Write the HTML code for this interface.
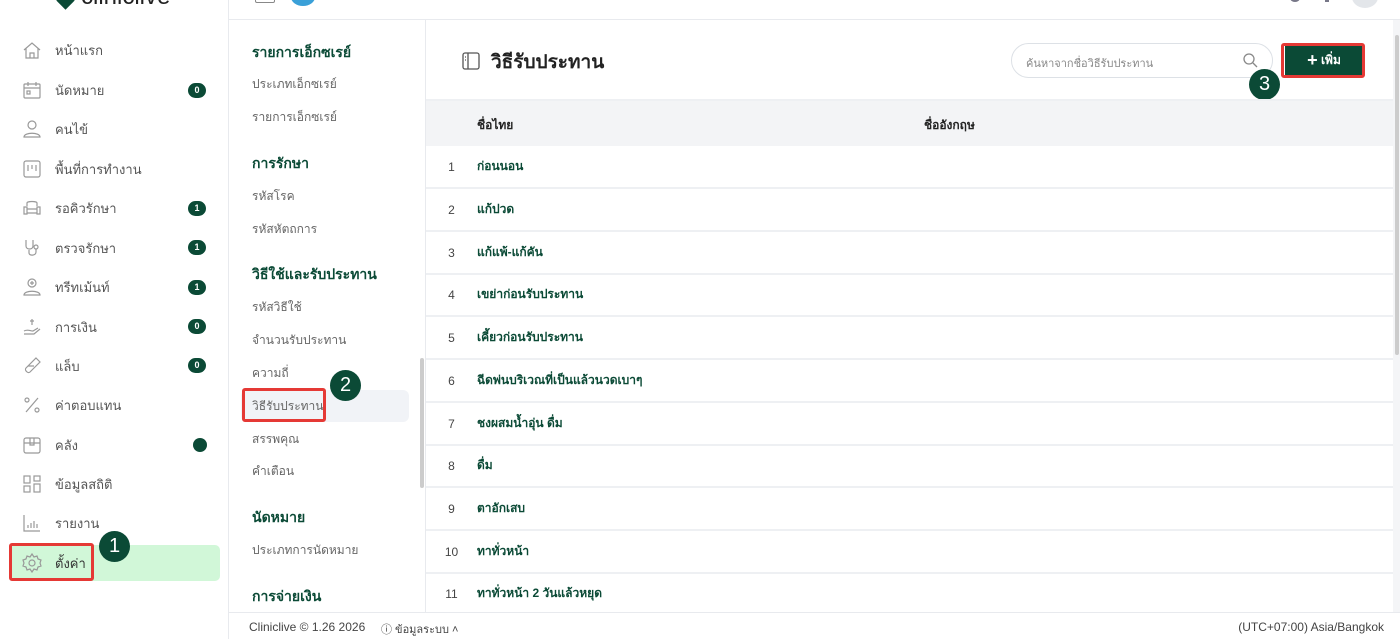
<!DOCTYPE html>
<html><head><meta charset="utf-8"><style>
*{box-sizing:border-box;margin:0;padding:0}
body{width:1400px;height:639px;overflow:hidden;background:#fff;font-family:"Liberation Sans","Noto Sans CJK SC",sans-serif;position:relative;color:#333}
.abs{position:absolute}
.sb{left:0;top:0;width:229px;height:639px;border-right:1px solid #e8eaee;background:#fff}
.ni{position:absolute;left:22px;height:24px;display:flex;align-items:center;font-size:13px;color:#555}
.ni svg{width:20px;height:20px;margin-right:13px;stroke:#999;fill:none;stroke-width:1.2}
.badge{position:absolute;left:188px;width:18px;height:15px;border-radius:8px;background:#0b4a36;color:#fff;font-size:9px;font-weight:bold;text-align:center;line-height:15px}
.sub{left:229px;top:20px;width:197px;height:592px;border-right:1px solid #e8eaee;background:#fff}
.sh{position:absolute;left:23px;font-size:14px;font-weight:bold;color:#0b4a36}
.si{position:absolute;left:23px;font-size:12px;color:#666}
.row{position:absolute;left:426px;width:967px;height:43px;border-bottom:2px solid #eef0f3;font-size:12px;display:flex;align-items:center}
.row .n{width:51px;text-align:center;color:#444}
.row .t{color:#0b4a36;font-weight:bold}
.circ{position:absolute;width:31px;height:31px;border-radius:50%;background:#0b4a36;color:#fff;font-size:20px;text-align:center;line-height:31px}
.red{position:absolute;border:3px solid #e53935;border-radius:3px}
</style></head><body>
<!-- top header -->
<div class="abs" style="left:229px;top:0;width:1171px;height:20px;border-bottom:1px solid #e8eaee"></div>
<div class="abs" style="left:255px;top:-6px;width:20px;height:9px;border:1px solid #888;border-radius:2px"></div>
<div class="abs" style="left:291px;top:-12px;width:24px;height:18px;border-radius:50%;background:#3aa0d8"></div>
<div class="abs" style="left:1290px;top:-6px;width:10px;height:8px;border-radius:50%;background:#778"></div>
<div class="abs" style="left:1325px;top:-4px;width:4px;height:6px;background:#778"></div>
<div class="abs" style="left:1352px;top:-14px;width:26px;height:22px;border-radius:50%;background:#e3e6ea"></div>

<!-- sidebar -->
<div class="abs sb"></div>
<div class="abs" style="left:59px;top:-6px;width:13px;height:13px;background:#0b4a36;transform:rotate(45deg)"></div>
<div class="abs" style="left:81px;top:-15px;font-size:24px;color:#222;line-height:24px">cliniclive</div>
<div class="abs" style="left:10px;top:545px;width:210px;height:36px;background:#d1f7d8;border-radius:5px"></div>
<div class="ni" style="top:38px"><svg viewBox="0 0 20 20"><path d="M2 10L10 3l8 7M4 8v10h12V8M8 18v-5h4v5"/></svg>หน้าแรก</div>
<div class="ni" style="top:78px"><svg viewBox="0 0 20 20"><rect x="2" y="4" width="16" height="14" rx="1"/><path d="M2 8h16M6 2v4M14 2v4"/><rect x="5" y="11" width="3" height="3"/></svg>นัดหมาย</div>
<div class="ni" style="top:117px"><svg viewBox="0 0 20 20"><circle cx="10" cy="6" r="4"/><path d="M2 18c0-5 16-5 16 0z"/></svg>คนไข้</div>
<div class="ni" style="top:157px"><svg viewBox="0 0 20 20"><rect x="2" y="2" width="16" height="16" rx="2"/><path d="M6 6v6M10 6v4M14 6v6"/></svg>พื้นที่การทำงาน</div>
<div class="ni" style="top:196px"><svg viewBox="0 0 20 20"><path d="M5 8V5c0-2 10-2 10 0v3M2 9h3v7H2zM15 9h3v7h-3zM5 11h10v4H5"/></svg>รอคิวรักษา</div>
<div class="ni" style="top:236px"><svg viewBox="0 0 20 20"><path d="M4 2v6c0 4 7 4 7 0V2M7 12v3c0 3 7 3 7-1v-3"/><circle cx="14" cy="9" r="2"/></svg>ตรวจรักษา</div>
<div class="ni" style="top:275px"><svg viewBox="0 0 20 20"><circle cx="10" cy="6" r="4"/><path d="M10 4v4M8 6h4M2 18c0-5 16-5 16 0z"/></svg>ทรีทเม้นท์</div>
<div class="ni" style="top:315px"><svg viewBox="0 0 20 20"><path d="M2 14c4-2 6 0 9 0l5-3M2 17h10l6-5M10 2v6M8 4h4"/></svg>การเงิน</div>
<div class="ni" style="top:354px"><svg viewBox="0 0 20 20"><path d="M14 2l4 4L8 16c-2 2-6-2-4-4zM6 10h6"/></svg>แล็บ</div>
<div class="ni" style="top:393px"><svg viewBox="0 0 20 20"><circle cx="5" cy="5" r="2"/><circle cx="15" cy="15" r="2"/><path d="M16 3L4 17"/></svg>ค่าตอบแทน</div>
<div class="ni" style="top:433px"><svg viewBox="0 0 20 20"><rect x="2" y="3" width="16" height="15" rx="2"/><path d="M2 8h16M8 3v7h4V3"/></svg>คลัง</div>
<div class="ni" style="top:472px"><svg viewBox="0 0 20 20"><rect x="2" y="2" width="6" height="7"/><rect x="12" y="2" width="6" height="5"/><rect x="2" y="12" width="6" height="6"/><rect x="12" y="10" width="6" height="8"/></svg>ข้อมูลสถิติ</div>
<div class="ni" style="top:511px"><svg viewBox="0 0 20 20"><path d="M2 2v16h16M6 15v-3M9 15v-5M12 15v-7M15 15v-4"/></svg>รายงาน</div>
<div class="ni" style="top:551px;color:#333"><svg viewBox="0 0 20 20"><circle cx="10" cy="10" r="3"/><path d="M10 1l2 3 3-1 1 3 3 1-1 3 1 3-3 1-1 3-3-1-2 3-2-3-3 1-1-3-3-1 1-3-1-3 3-1 1-3 3 1z"/></svg>ตั้งค่า</div>
<div class="badge" style="top:83px">0</div>
<div class="badge" style="top:201px">1</div>
<div class="badge" style="top:240px">1</div>
<div class="badge" style="top:280px">1</div>
<div class="badge" style="top:319px">0</div>
<div class="badge" style="top:358px">0</div>
<div class="abs" style="left:193px;top:438px;width:14px;height:14px;border-radius:50%;background:#0b4a36"></div>
<div class="red" style="left:9px;top:543px;width:85px;height:38px"></div>
<div class="circ" style="left:99px;top:531px">1</div>

<!-- submenu -->
<div class="abs sub">
<div class="abs" style="left:12px;top:370px;width:168px;height:32px;background:#f1f3f7;border-radius:6px"></div>
<div class="sh" style="top:22px">รายการเอ็กซเรย์</div>
<div class="si" style="top:55px">ประเภทเอ็กซเรย์</div>
<div class="si" style="top:88px">รายการเอ็กซเรย์</div>
<div class="sh" style="top:133px">การรักษา</div>
<div class="si" style="top:167px">รหัสโรค</div>
<div class="si" style="top:200px">รหัสหัตถการ</div>
<div class="sh" style="top:244px">วิธีใช้และรับประทาน</div>
<div class="si" style="top:278px">รหัสวิธีใช้</div>
<div class="si" style="top:311px">จำนวนรับประทาน</div>
<div class="si" style="top:344px">ความถี่</div>
<div class="si" style="top:377px">วิธีรับประทาน</div>
<div class="si" style="top:410px">สรรพคุณ</div>
<div class="si" style="top:442px">คำเตือน</div>
<div class="sh" style="top:487px">นัดหมาย</div>
<div class="si" style="top:521px">ประเภทการนัดหมาย</div>
<div class="sh" style="top:566px">การจ่ายเงิน</div>
<div class="abs" style="left:191px;top:338px;width:4px;height:130px;background:#ccc;border-radius:2px"></div>
</div>
<div class="red" style="left:242px;top:388px;width:84px;height:34px"></div>
<div class="circ" style="left:330px;top:370px">2</div>

<!-- main -->
<svg class="abs" style="left:461px;top:51px" width="20" height="20" viewBox="0 0 20 20" fill="none" stroke="#555" stroke-width="1.3"><rect x="2" y="2" width="16" height="16" rx="2"/><path d="M7 2v16M4 6h1M4 9h1"/></svg>
<div class="abs" style="left:491px;top:47px;font-size:19px;font-weight:bold;color:#222">วิธีรับประทาน</div>
<div class="abs" style="left:1011px;top:43px;width:262px;height:35px;border:1px solid #dde1e6;border-radius:18px;font-size:11px;color:#888;padding:10px 0 0 14px">ค้นหาจากชื่อวิธีรับประทาน</div>
<svg class="abs" style="left:1242px;top:52px" width="16" height="16" viewBox="0 0 16 16" fill="none" stroke="#888" stroke-width="1.3"><circle cx="7" cy="7" r="5"/><path d="M11 11l4 4"/></svg>
<div class="abs" style="left:1285px;top:45px;width:78px;height:31px;background:#0b4a36;color:#fff;font-size:12px;font-weight:bold;text-align:center;line-height:31px"><span style="font-size:18px;vertical-align:-2px">+</span> เพิ่ม</div>
<div class="red" style="left:1281px;top:43px;width:84px;height:35px"></div>
<div class="circ" style="left:1249px;top:69px">3</div>
<div class="abs" style="left:426px;top:99px;width:967px;height:2px;background:#eef0f3"></div>
<div class="abs" style="left:426px;top:101px;width:967px;height:45px;background:#f3f4f6;font-size:12px;font-weight:bold;color:#222">
<span class="abs" style="left:51px;top:15px">ชื่อไทย</span><span class="abs" style="left:498px;top:15px">ชื่ออังกฤษ</span></div>
<div class="row" style="top:146px"><span class="n">1</span><span class="t">ก่อนนอน</span></div>
<div class="row" style="top:189px"><span class="n">2</span><span class="t">แก้ปวด</span></div>
<div class="row" style="top:232px"><span class="n">3</span><span class="t">แก้แพ้-แก้คัน</span></div>
<div class="row" style="top:274px"><span class="n">4</span><span class="t">เขย่าก่อนรับประทาน</span></div>
<div class="row" style="top:317px"><span class="n">5</span><span class="t">เคี้ยวก่อนรับประทาน</span></div>
<div class="row" style="top:360px"><span class="n">6</span><span class="t">ฉีดพ่นบริเวณที่เป็นแล้วนวดเบาๆ</span></div>
<div class="row" style="top:403px"><span class="n">7</span><span class="t">ชงผสมน้ำอุ่น ดื่ม</span></div>
<div class="row" style="top:445px"><span class="n">8</span><span class="t">ดื่ม</span></div>
<div class="row" style="top:488px"><span class="n">9</span><span class="t">ตาอักเสบ</span></div>
<div class="row" style="top:531px"><span class="n">10</span><span class="t">ทาทั่วหน้า</span></div>
<div class="row" style="top:573px"><span class="n">11</span><span class="t">ทาทั่วหน้า 2 วันแล้วหยุด</span></div>
<div class="abs" style="left:1393px;top:20px;width:7px;height:592px;background:#f4f5f7"></div>
<div class="abs" style="left:1395px;top:35px;width:4px;height:320px;background:#ccc;border-radius:2px"></div>

<!-- footer -->
<div class="abs" style="left:229px;top:612px;width:1171px;height:27px;border-top:1px solid #e8eaee;background:#fff;font-size:12px;color:#444">
<span class="abs" style="left:20px;top:7px">Cliniclive © 1.26 2026</span>
<span class="abs" style="left:152px;top:7px;font-size:11px">ⓘ ข้อมูลระบบ ˄</span>
<span class="abs" style="right:16px;top:7px">(UTC+07:00) Asia/Bangkok</span></div>
</body></html>
